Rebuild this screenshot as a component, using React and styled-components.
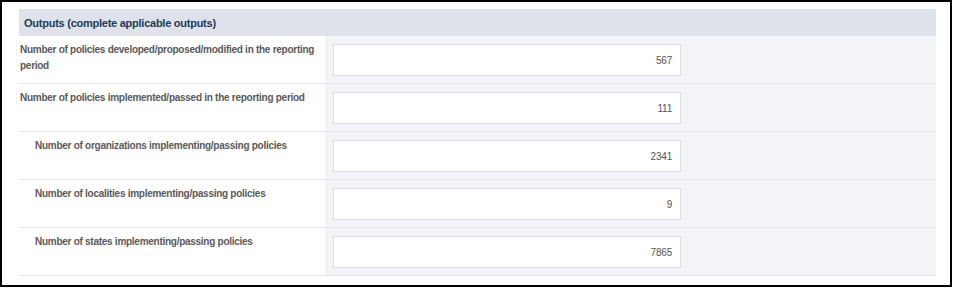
import React from 'react';
import styled, { createGlobalStyle } from 'styled-components';

const GlobalStyle = createGlobalStyle`
  html, body {
    margin: 0;
    padding: 0;
    background: #ffffff;
    font-family: "Liberation Sans", Arial, sans-serif;
  }
`;

const Frame = styled.div`
  box-sizing: border-box;
  width: 952px;
  height: 287px;
  border: 2px solid #000;
  padding: 7px 14px 0 17px;
`;

const Section = styled.div`
  display: flex;
  flex-direction: column;
`;

const Header = styled.div`
  height: 27px;
  display: flex;
  align-items: center;
  padding-left: 5px;
  background: #dfe2ea;
  color: #1e3a58;
  font-size: 11px;
  letter-spacing: -0.25px;
  font-weight: bold;
`;

const Row = styled.div`
  display: grid;
  grid-template-columns: 306px 1fr;
  border-bottom: 1px solid #e6e7eb;
`;

const Label = styled.div`
  padding: 6px 8px 8px ${(p) => (p.$indent ? 16 : 1)}px;
  color: #595959;
  font-size: 10px;
  letter-spacing: -0.27px;
  font-weight: bold;
  line-height: 16px;
`;

const Field = styled.div`
  background: #f3f4f8;
  padding: 8px 8px 7px 8px;
`;

const Input = styled.input`
  box-sizing: border-box;
  display: block;
  width: 348px;
  height: 32px;
  border: 1px solid #dfe0e5;
  background: #fff;
  padding: 0 8px;
  text-align: right;
  font-family: "Liberation Sans", Arial, sans-serif;
  font-size: 10px;
  letter-spacing: -0.2px;
  color: #555;
  outline: none;
`;

const rows = [
  { label: 'Number of policies developed/proposed/modified in the reporting period', value: '567' },
  { label: 'Number of policies implemented/passed in the reporting period', value: '111' },
  { label: 'Number of organizations implementing/passing policies', value: '2341', indent: true },
  { label: 'Number of localities implementing/passing policies', value: '9', indent: true },
  { label: 'Number of states implementing/passing policies', value: '7865', indent: true },
];

export default function App() {
  return (
    <>
      <GlobalStyle />
      <Frame>
        <Section>
          <Header>Outputs (complete applicable outputs)</Header>
          {rows.map((r) => (
            <Row key={r.label}>
              <Label $indent={r.indent}>{r.label}</Label>
              <Field>
                <Input type="text" defaultValue={r.value} readOnly />
              </Field>
            </Row>
          ))}
        </Section>
      </Frame>
    </>
  );
}
